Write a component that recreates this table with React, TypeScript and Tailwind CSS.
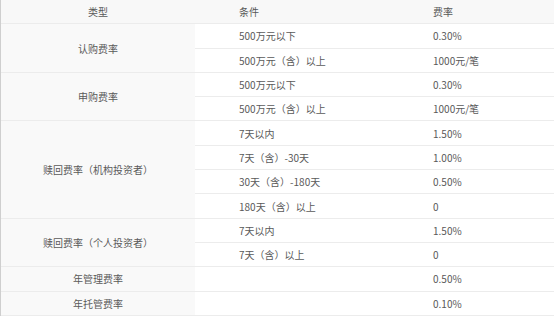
export default function App() {
  const font = { fontFamily: '"Noto Sans CJK SC", "Noto Sans", sans-serif' };
  const groups = [
    { type: "认购费率", rows: [["500万元以下", "0.30%"], ["500万元（含）以上", "1000元/笔"]] },
    { type: "申购费率", rows: [["500万元以下", "0.30%"], ["500万元（含）以上", "1000元/笔"]] },
    {
      type: "赎回费率（机构投资者）",
      rows: [["7天以内", "1.50%"], ["7天（含）-30天", "1.00%"], ["30天（含）-180天", "0.50%"], ["180天（含）以上", "0"]],
    },
    { type: "赎回费率（个人投资者）", rows: [["7天以内", "1.50%"], ["7天（含）以上", "0"]] },
    { type: "年管理费率", rows: [["", "0.50%"]] },
    { type: "年托管费率", rows: [["", "0.10%"]] },
  ];

  return (
    <div className="w-[554px] h-[318px] overflow-hidden bg-white text-[10px] text-[#595959]" style={font}>
      <div className="border-l border-[#cfcfcf]">
        <div className="flex h-[24.3px] bg-[#f8f8f8] border-b border-[#ececec]">
          <div className="w-[194px] flex items-center justify-center">类型</div>
          <div className="w-[194px] flex items-center pl-[44px]">条件</div>
          <div className="flex-1 flex items-center pl-[44px]">费率</div>
        </div>
        {groups.map((g) => (
          <div key={g.type} className="flex">
            <div className="w-[194px] bg-[#f9f9f9] border-b border-[#ececec] flex items-center justify-center">
              {g.type}
            </div>
            <div className="flex-1 flex flex-col">
              {g.rows.map(([cond, rate], i) => (
                <div key={i} className="flex h-[24.3px] items-center border-b border-[#ececec]">
                  <div className="w-[194px] pl-[44px]">{cond}</div>
                  <div className="flex-1 pl-[44px]">{rate}</div>
                </div>
              ))}
            </div>
          </div>
        ))}
      </div>
    </div>
  );
}
